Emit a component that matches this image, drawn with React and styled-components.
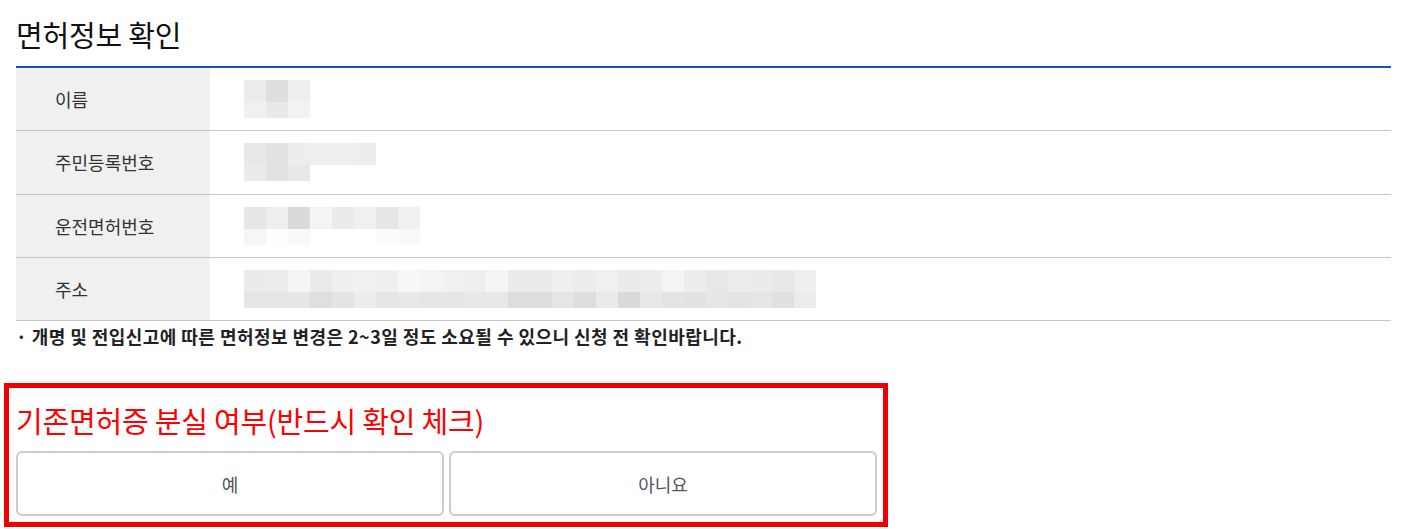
import styled, { createGlobalStyle } from "styled-components";

const GlobalStyle = createGlobalStyle`
  html, body {
    margin: 0;
    padding: 0;
    background: #ffffff;
  }
  body {
    font-family: "Noto Sans CJK KR", "Noto Sans", sans-serif;
    color: #222;
  }
`;

const Page = styled.div`
  padding: 0 18px 0 16px;
`;

const Title = styled.h2`
  margin: 0;
  height: 66px;
  display: flex;
  align-items: center;
  padding-top: 2px;
  box-sizing: border-box;
  font-size: 29px;
  font-weight: 400;
  color: #111;
  letter-spacing: -0.2px;
`;

const Table = styled.div`
  border-top: 2px solid #1553b4;
`;

const Row = styled.div`
  display: grid;
  grid-template-columns: 194px 1fr;
  height: 63.3px;
  border-bottom: 1px solid #c6c6c6;
  box-sizing: border-box;
`;

const Label = styled.div`
  display: flex;
  align-items: center;
  padding-left: 39px;
  background: #f0f0f0;
  font-size: 18px;
  color: #333;
`;

const Value = styled.div`
  display: flex;
  align-items: center;
  padding-left: 34px;
`;

const Mosaic = styled.div`
  display: flex;
  flex-direction: column;
`;

const MosaicLine = styled.div`
  display: flex;
  height: ${({ $h }) => $h}px;
`;

const Cell = styled.span`
  width: 22px;
  height: 100%;
  background: ${({ $c }) => $c};
`;

const Note = styled.p`
  margin: 0;
  padding-top: 1px;
  font-size: 18px;
  font-weight: 700;
  line-height: 28px;
  color: #222;
  letter-spacing: 0.45px;
`;

const LossBox = styled.section`
  margin: 33px 0 0 -12px;
  width: 884px;
  box-sizing: border-box;
  border: 5px solid #ee0000;
  padding: 11px 6px 6px 7px;
`;

const LossTitle = styled.h3`
  margin: 0 0 10px;
  font-size: 29px;
  font-weight: 400;
  color: #ff0000;
  letter-spacing: -0.2px;
  line-height: 42px;
`;

const Choices = styled.div`
  display: grid;
  grid-template-columns: 1fr 1fr;
  gap: 5px;
`;

const Choice = styled.button`
  height: 65px;
  border: 2px solid #cccccc;
  border-radius: 6px;
  background: #ffffff;
  font-family: "Noto Sans CJK KR", "Noto Sans", sans-serif;
  font-size: 18px;
  color: #555;
  cursor: pointer;
`;

const rows = [
  {
    label: "이름",
    top: ["#ececec", "#dedede", "#eef0ef"],
    bottom: ["#f0f0f0", "#eae9e8", "#f2f3f5"],
  },
  {
    label: "주민등록번호",
    top: ["#e8e8e7", "#e2e2e2", "#eceeed", "#efefef", "#f0efee", "#eceeed"],
    bottom: ["#ecebe9", "#e2e2e2", "#e7e8e8"],
  },
  {
    label: "운전면허번호",
    top: ["#e8e7e5", "#eeeeee", "#d9dadc", "#f4f4f2", "#ebebea", "#f0f0f0", "#e6e6e6", "#eff0f2"],
    bottom: ["#f6f6f6", "#fdfdfd", "#f9f9f9", "#ffffff", "#ffffff", "#ffffff", "#fbfbfb", "#f9f9f9"],
  },
  {
    label: "주소",
    top: [
      "#ebebeb", "#ececec", "#f5f5f5", "#e9eaea", "#efefef", "#f1f1f1", "#efefef", "#f7f7f7",
      "#f4f4f4", "#f1f1f1", "#eeeeee", "#f5f5f5", "#ebebeb", "#ebebeb", "#efefef", "#ebeded",
      "#f0f0f0", "#ebebeb", "#ececec", "#f3f4f3", "#eeedec", "#e8e8e8", "#ececec", "#eaebec",
      "#e8e8e8", "#efefef",
    ],
    bottom: [
      "#e6e6e6", "#e6e6e6", "#e6e6e6", "#dfdfdf", "#e4e4e4", "#ededed", "#e6e6e6", "#e8e8e8",
      "#e6e6e6", "#e6e6e6", "#e8e8e8", "#e8e8e8", "#dddddd", "#dddddd", "#e5e5e5", "#dedede",
      "#eaeaea", "#dadada", "#e8e8e8", "#e4e4e4", "#e2e2e2", "#e6e6e6", "#e4e4e4", "#e6e6e6",
      "#e0e0e0", "#ececec",
    ],
  },
];

export default function App() {
  return (
    <Page>
      <GlobalStyle />
      <Title>면허정보 확인</Title>
      <Table>
        {rows.map((row) => (
          <Row key={row.label}>
            <Label>{row.label}</Label>
            <Value>
              <Mosaic aria-hidden>
                <MosaicLine $h={22}>
                  {row.top.map((c, i) => (
                    <Cell key={i} $c={c} />
                  ))}
                </MosaicLine>
                <MosaicLine $h={16}>
                  {row.bottom.map((c, i) => (
                    <Cell key={i} $c={c} />
                  ))}
                </MosaicLine>
              </Mosaic>
            </Value>
          </Row>
        ))}
      </Table>
      <Note>· 개명 및 전입신고에 따른 면허정보 변경은 2~3일 정도 소요될 수 있으니 신청 전 확인바랍니다.</Note>
      <LossBox>
        <LossTitle>기존면허증 분실 여부(반드시 확인 체크)</LossTitle>
        <Choices>
          <Choice type="button">예</Choice>
          <Choice type="button">아니요</Choice>
        </Choices>
      </LossBox>
    </Page>
  );
}
